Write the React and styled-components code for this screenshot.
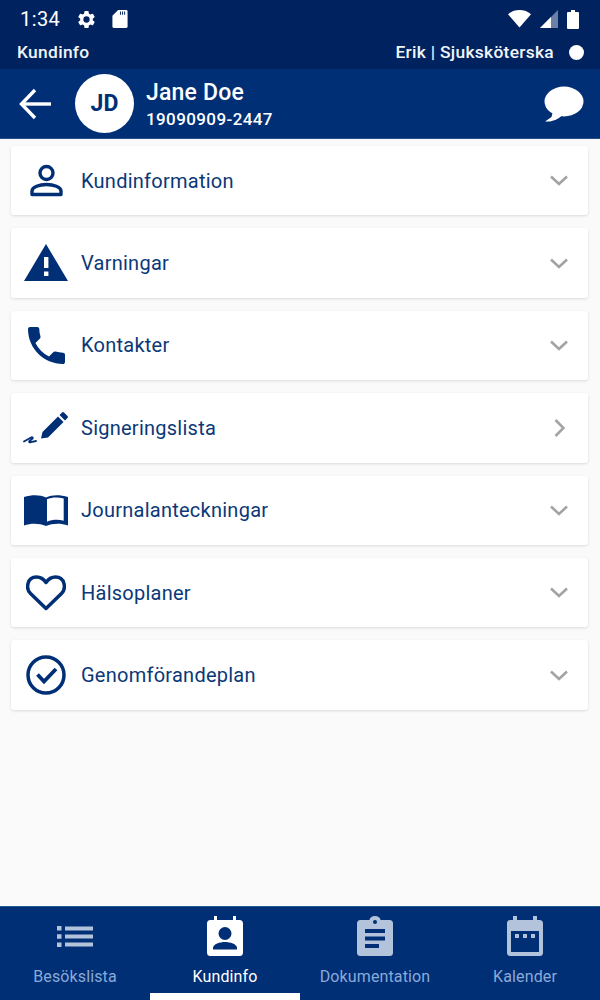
import React from 'react';
import styled, { createGlobalStyle } from 'styled-components';

const GlobalStyle = createGlobalStyle`
  html, body { margin: 0; padding: 0; background: #fafafa; }
  * { box-sizing: border-box; }
  body { font-family: Roboto, "Liberation Sans", sans-serif; }
`;

const NAVY = '#002f76';
const DARK = '#00235f';

const Screen = styled.div`
  width: 600px;
  height: 1000px;
  display: flex;
  flex-direction: column;
  background: #fafafa;
  overflow: hidden;
`;
const TopArea = styled.div`
  height: 69px;
  background: ${DARK};
  padding: 0 16px 0 17px;
  display: flex;
  flex-direction: column;
`;
const StatusBar = styled.div`
  height: 38px;
  display: flex;
  align-items: center;
  justify-content: space-between;
  color: #fff;
  padding: 0 5px 0 3px;
`;
const StatusGroup = styled.div`
  display: flex;
  align-items: center;
  gap: ${(p) => p.gap || 0}px;
`;
const Time = styled.span`
  font-size: 20px;
  margin-right: 16px;
  letter-spacing: 0.4px;
`;
const AppBar = styled.div`
  display: flex;
  align-items: center;
  justify-content: space-between;
  height: 28px;
  color: #f2f5fa;
  font-size: 17.4px;
  font-weight: 500;
  letter-spacing: 0.3px;
`;
const UserBox = styled.div`
  display: flex;
  align-items: center;
  gap: 15px;
`;
const OnlineDot = styled.span`
  width: 15px;
  height: 15px;
  border-radius: 50%;
  background: #fff;
`;
const Header = styled.div`
  height: 70px;
  background: ${NAVY};
  display: flex;
  align-items: center;
  padding: 0 16px 0 18px;
  color: #fff;
  border-bottom: 1px solid #23508a;
`;
const Avatar = styled.div`
  width: 59px;
  height: 59px;
  border-radius: 50%;
  background: #fff;
  color: ${NAVY};
  display: flex;
  align-items: center;
  justify-content: center;
  font-size: 23px;
  font-weight: 700;
  margin-left: 23px;
`;
const Person = styled.div`
  flex: 1;
  margin-left: 12px;
  display: flex;
  flex-direction: column;
`;
const PersonName = styled.div`
  font-size: 23px;
  font-weight: 500;
  line-height: 30px;
  letter-spacing: 0.2px;
`;
const PersonNumber = styled.div`
  font-size: 17px;
  font-weight: 500;
  line-height: 22px;
  letter-spacing: 0.4px;
`;
const List = styled.div`
  flex: 1;
  display: flex;
  flex-direction: column;
  gap: 13px;
  padding: 7px 12px 0 11px;
`;
const Card = styled.div`
  height: 69.4px;
  background: #fff;
  border-radius: 3px;
  box-shadow: 0 1px 3px rgba(0, 0, 0, 0.13);
  display: flex;
  align-items: center;
  padding: 0 20px 0 11px;
`;
const IconSlot = styled.div`
  width: 48px;
  height: 48px;
  display: flex;
  align-items: center;
  justify-content: center;
  margin-right: 11px;
  flex-shrink: 0;
`;
const CardLabel = styled.span`
  flex: 1;
  font-size: 20px;
  color: #0b3877;
  letter-spacing: 0.25px;
`;
const TabBar = styled.div`
  height: 94px;
  background: ${NAVY};
  border-top: 1px solid #1d5a8f;
  display: grid;
  grid-template-columns: repeat(4, 150px);
`;
const Tab = styled.div`
  position: relative;
  display: flex;
  flex-direction: column;
  align-items: center;
  padding-top: 6px;
  color: ${(p) => (p.$active ? '#fff' : '#8aaad8')};
`;
const TabIcon = styled.div`
  height: 46px;
  display: flex;
  align-items: center;
  justify-content: center;
`;
const TabLabel = styled.span`
  margin-top: 8px;
  font-size: 16px;
  letter-spacing: 0.12px;
`;
const ActiveBar = styled.span`
  position: absolute;
  left: 0;
  right: 0;
  bottom: 0;
  height: 7px;
  background: #fff;
`;

const BackIcon = () => (
  <svg width="34" height="34" viewBox="0 0 34 34" fill="none" stroke="#fff" strokeWidth="3.4">
    <path d="M33 17H4" />
    <path d="M17 3 3.5 17 17 31" />
  </svg>
);
const ChatIcon = () => (
  <svg width="40" height="36" viewBox="0 0 40 36" fill="#fff">
    <ellipse cx="20" cy="15.5" rx="19.5" ry="15" />
    <path d="M9 25 7.5 31 1 35.5C8 36 14 33.5 18 29.5Z" />
  </svg>
);
const GearIcon = () => (
  <svg width="21" height="21" viewBox="0 0 24 24" fill="#fff">
    <path d="M19.14 12.94c.04-.3.06-.61.06-.94s-.02-.64-.07-.94l2.03-1.58a.49.49 0 0 0 .12-.61l-1.92-3.32a.49.49 0 0 0-.59-.22l-2.39.96a7 7 0 0 0-1.62-.94l-.36-2.54a.48.48 0 0 0-.48-.41h-3.84a.48.48 0 0 0-.47.41l-.36 2.54c-.59.24-1.13.57-1.62.94l-2.39-.96a.49.49 0 0 0-.59.22L2.73 8.87a.48.48 0 0 0 .12.61l2.03 1.58c-.05.3-.09.63-.09.94s.02.64.07.94l-2.03 1.58a.49.49 0 0 0-.12.61l1.92 3.32c.12.22.37.29.59.22l2.39-.96c.5.38 1.03.7 1.62.94l.36 2.54c.05.24.24.41.48.41h3.84c.24 0 .44-.17.47-.41l.36-2.54c.59-.24 1.13-.56 1.62-.94l2.39.96c.22.08.47 0 .59-.22l1.92-3.32a.47.47 0 0 0-.12-.61zM12 15.6A3.6 3.6 0 1 1 12 8.4a3.6 3.6 0 0 1 0 7.2z" />
  </svg>
);
const SdIcon = () => (
  <svg width="16" height="18" viewBox="0 0 16 19" fill="#fff" style={{ marginLeft: 15 }}>
    <path d="M6 0h8.5A1.5 1.5 0 0 1 16 1.5v16a1.5 1.5 0 0 1-1.5 1.5h-13A1.5 1.5 0 0 1 0 17.5V6Z" />
    <path fill={DARK} d="M8 1.5h1V5H8zM10.2 1.5h1V5h-1zM12.4 1.5h1V5h-1z" />
  </svg>
);
const WifiIcon = () => (
  <svg width="23" height="18" viewBox="0 0 23 18" fill="#fff">
    <path d="M11.5 17.5 0 4.2C3 1.6 7 0 11.5 0S20 1.6 23 4.2Z" />
  </svg>
);
const SignalIcon = () => (
  <svg width="18" height="18" viewBox="0 0 18 18">
    <path fill="#6c7fa6" d="M18 0v18H0Z" />
    <path fill="#fff" d="M11 7v11H0Z" />
  </svg>
);
const BatteryIcon = () => (
  <svg width="12" height="19" viewBox="0 0 12 19" fill="#fff">
    <path d="M4 0h4v2h3a1 1 0 0 1 1 1v15a1 1 0 0 1-1 1H1a1 1 0 0 1-1-1V3a1 1 0 0 1 1-1h3Z" />
  </svg>
);

const PersonIcon = () => (
  <svg width="33" height="33" viewBox="0 0 33 33" fill="none" stroke={NAVY} strokeWidth="3.4">
    <circle cx="16.5" cy="9" r="6.5" />
    <path d="M2 30.5V27C2 23 9.5 20.5 16.5 20.5S31 23 31 27v3.500Z" strokeLinejoin="round" />
  </svg>
);
const WarningIcon = () => (
  <svg width="44" height="38" viewBox="0 0 44 38">
    <path fill={NAVY} d="M22 0 44 37H0Z" />
    <path fill="#fff" d="M20 13h4.4v11H20zM20 27.5h4.4V32H20z" />
  </svg>
);
const PhoneIcon = () => (
  <svg width="37" height="37" viewBox="3 3 18 18" fill={NAVY}>
    <path d="M6.62 10.79a15.05 15.05 0 0 0 6.59 6.59l2.2-2.2c.27-.27.67-.36 1.02-.24 1.12.37 2.33.57 3.57.57.55 0 1 .45 1 1V20c0 .55-.45 1-1 1C10.61 21 3 13.39 3 4c0-.55.45-1 1-1h3.5c.55 0 1 .45 1 1 0 1.25.2 2.45.57 3.57.11.35.03.74-.25 1.02z" />
  </svg>
);
const SignIcon = () => (
  <svg width="46" height="34" viewBox="0 0 46 34" fill="none">
    <path fill={NAVY} d="M18 27.5 19.5 21 35 5.5l5.5 5.5L25 26.5Z" />
    <path fill={NAVY} d="M36.5 4 39 1.500a1.400 1.400 0 0 1 2 0L44.500 5a1.400 1.400 0 0 1 0 2L42 9.500Z" />
    <path stroke={NAVY} strokeWidth="1.8" strokeLinecap="round" strokeLinejoin="round" d="M1 30.5 8 26.5c1.500-.7 2.600.4 1 1.500L6.500 30c-1 1 .3 1.600 1.500 1.200l5-1.200" />
  </svg>
);
const BookIcon = () => (
  <svg width="44" height="33" viewBox="0 0 44 33">
    <path fill={NAVY} d="M0 3C8 .5 16 .5 22 3.500 28 .5 36 .5 44 3v28.500c-7-2.500-15-2.500-22 .5-7-3-15-3-22-.5Z" />
    <path fill="#fff" d="M23 5.300C28 3 34.500 3 39.700 4.500V26.800C34.500 25.300 28 25.600 23 27.800Z" />
  </svg>
);
const HeartIcon = () => (
  <svg width="40" height="36" viewBox="0 0 40 36" fill="none" stroke={NAVY} strokeWidth="3.5">
    <path strokeLinejoin="round" d="M20 33.500 4.500 18.500C-.500 13.500 1 2 10.500 2 15 2 18 4.500 20 7.500 22 4.500 25 2 29.500 2 39 2 40.500 13.500 35.500 18.500Z" />
  </svg>
);
const CheckCircleIcon = () => (
  <svg width="40" height="40" viewBox="0 0 40 40" fill="none" stroke={NAVY}>
    <circle cx="20" cy="20" r="18" strokeWidth="3.5" />
    <path d="M11.500 19.500 18 26.500 30 14" strokeWidth="3.8" />
  </svg>
);
const ChevronDown = () => (
  <svg width="18" height="11" viewBox="0 0 18 11" fill="none" stroke="#a3a3a3" strokeWidth="2.6">
    <path d="M1 1.500 9 9l8-7.500" />
  </svg>
);
const ChevronRight = () => (
  <svg width="11" height="18" viewBox="0 0 11 18" fill="none" stroke="#a3a3a3" strokeWidth="2.6" style={{ marginRight: 3 }}>
    <path d="M1.500 1 9.500 9l-8 8" />
  </svg>
);

const ListTabIcon = ({ color }) => (
  <svg width="36" height="21" viewBox="0 0 36 21" fill={color}>
    <path d="M0 0h4.500v4.500H0zM8 .500h28v4H8zM0 8.250h4.500v4.500H0zM8 8.500h28v4H8zM0 16.500h4.500V21H0zM8 16.500h28v4H8z" />
  </svg>
);
const CustomerTabIcon = ({ color }) => (
  <svg width="36" height="40" viewBox="0 0 36 40">
    <path fill={color} d="M7 0h3v4h16V0h3v4h3.500A3.500 3.500 0 0 1 36 7.500v29a3.500 3.500 0 0 1-3.500 3.500h-29A3.500 3.500 0 0 1 0 36.500v-29A3.500 3.500 0 0 1 3.500 4H7Z" />
    <circle cx="18" cy="17.500" r="6.500" fill={NAVY} />
    <path fill={NAVY} d="M6 33.500V32c0-4 7-6 12-6s12 2 12 6v1.500Z" />
  </svg>
);
const ClipboardTabIcon = ({ color }) => (
  <svg width="36" height="40" viewBox="0 0 36 40">
    <path fill={color} d="M12.500 4a5.500 4 0 0 1 11 0H32.500A3.500 3.500 0 0 1 36 7.500v29a3.500 3.500 0 0 1-3.500 3.500h-29A3.500 3.500 0 0 1 0 36.500v-29A3.500 3.500 0 0 1 3.500 4Z" />
    <circle cx="18" cy="6" r="2" fill={NAVY} />
    <path fill={NAVY} d="M8 13h20v4H8zM8 20.500h20v4H8zM8 28h14v4H8z" />
  </svg>
);
const CalendarTabIcon = ({ color }) => (
  <svg width="36" height="40" viewBox="0 0 36 40">
    <path fill={color} d="M6 0h4v4h16V0h4v4h2.500A3.500 3.500 0 0 1 36 7.500v29a3.500 3.500 0 0 1-3.500 3.500h-29A3.500 3.500 0 0 1 0 36.500v-29A3.500 3.500 0 0 1 3.500 4H6Z" />
    <path fill={NAVY} d="M4 15h28v21H4Z" />
    <path fill={color} d="M8 18h4v4H8zM16 18h4v4h-4zM24 18h4v4h-4z" />
  </svg>
);

const items = [
  { label: 'Kundinformation', Icon: PersonIcon },
  { label: 'Varningar', Icon: WarningIcon },
  { label: 'Kontakter', Icon: PhoneIcon },
  { label: 'Signeringslista', Icon: SignIcon, link: true },
  { label: 'Journalanteckningar', Icon: BookIcon },
  { label: 'Hälsoplaner', Icon: HeartIcon },
  { label: 'Genomförandeplan', Icon: CheckCircleIcon },
];

const tabs = [
  { label: 'Besökslista', Icon: ListTabIcon },
  { label: 'Kundinfo', Icon: CustomerTabIcon, active: true },
  { label: 'Dokumentation', Icon: ClipboardTabIcon },
  { label: 'Kalender', Icon: CalendarTabIcon },
];

const App = () => (
  <Screen>
    <GlobalStyle />
    <TopArea>
      <StatusBar>
        <StatusGroup>
          <Time>1:34</Time>
          <GearIcon />
          <SdIcon />
        </StatusGroup>
        <StatusGroup gap={9}>
          <WifiIcon />
          <SignalIcon />
          <BatteryIcon />
        </StatusGroup>
      </StatusBar>
      <AppBar>
        <span>Kundinfo</span>
        <UserBox>
          <span>Erik | Sjuksköterska</span>
          <OnlineDot />
        </UserBox>
      </AppBar>
    </TopArea>
    <Header>
      <BackIcon />
      <Avatar>JD</Avatar>
      <Person>
        <PersonName>Jane Doe</PersonName>
        <PersonNumber>19090909-2447</PersonNumber>
      </Person>
      <ChatIcon />
    </Header>
    <List>
      {items.map(({ label, Icon, link }) => (
        <Card key={label}>
          <IconSlot>
            <Icon />
          </IconSlot>
          <CardLabel>{label}</CardLabel>
          {link ? <ChevronRight /> : <ChevronDown />}
        </Card>
      ))}
    </List>
    <TabBar>
      {tabs.map(({ label, Icon, active }) => (
        <Tab key={label} $active={active}>
          <TabIcon>
            <Icon color={active ? '#fff' : '#b4c3dc'} />
          </TabIcon>
          <TabLabel>{label}</TabLabel>
          {active && <ActiveBar />}
        </Tab>
      ))}
    </TabBar>
  </Screen>
);

export default App;
